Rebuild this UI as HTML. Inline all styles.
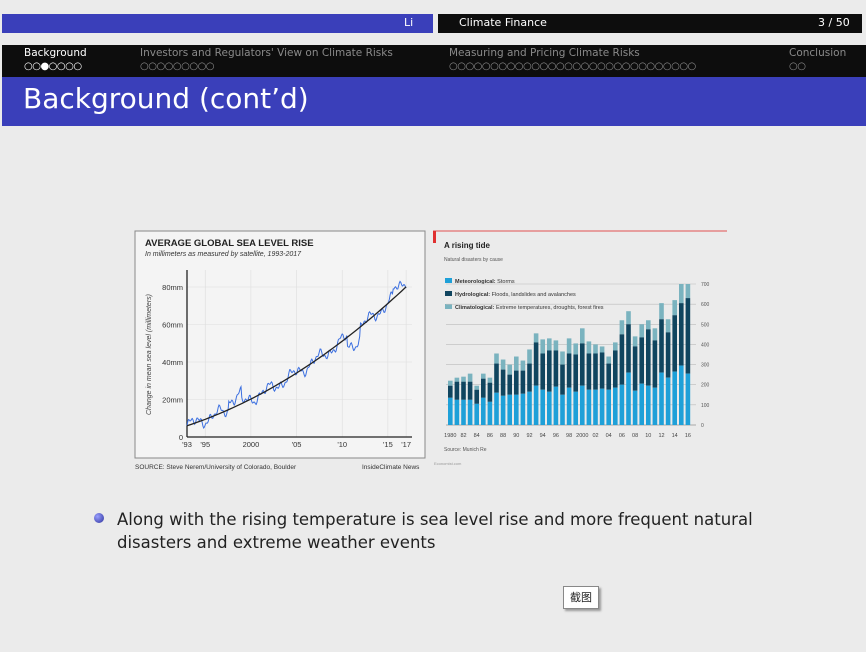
<!DOCTYPE html>
<html><head><meta charset="utf-8"><style>
body{margin:0;width:866px;height:652px;background:#ebebeb;font-family:"DejaVu Sans","Liberation Sans",sans-serif;position:relative;overflow:hidden}
.a{position:absolute}
</style></head><body>
<div class="a" style="left:2px;top:14px;width:431px;height:19px;background:#3a3fba"></div>
<div class="a" style="left:404px;top:16px;color:#fff;font-size:11px">Li</div>
<div class="a" style="left:438px;top:14px;width:424px;height:19px;background:#0d0d0d"></div>
<div class="a" style="left:459px;top:16px;color:#fff;font-size:11px">Climate Finance</div>
<div class="a" style="left:818px;top:16px;color:#fff;font-size:11px">3 / 50</div>
<div class="a" style="left:2px;top:45px;width:864px;height:32px;background:#0d0d0d"></div>
<div class="a" style="left:24px;top:47px;color:#fff;font-size:10.5px">Background</div>
<div class="a" style="left:24px;top:61px;color:#fff;font-size:10px;letter-spacing:-0.5px">○○●○○○○</div>
<div class="a" style="left:140px;top:47px;color:#8a8a8a;font-size:10.5px">Investors and Regulators' View on Climate Risks</div>
<div class="a" style="left:140px;top:61px;color:#8a8a8a;font-size:10px;letter-spacing:-0.5px">○○○○○○○○○</div>
<div class="a" style="left:449px;top:47px;color:#8a8a8a;font-size:10.5px">Measuring and Pricing Climate Risks</div>
<div class="a" style="left:449px;top:61px;color:#8a8a8a;font-size:10px;letter-spacing:-0.5px">○○○○○○○○○○○○○○○○○○○○○○○○○○○○○○</div>
<div class="a" style="left:789px;top:47px;color:#8a8a8a;font-size:10.5px">Conclusion</div>
<div class="a" style="left:789px;top:61px;color:#8a8a8a;font-size:10px;letter-spacing:-0.5px">○○</div>
<div class="a" style="left:2px;top:77px;width:864px;height:49px;background:#3a3fba"></div>
<div class="a" style="left:23px;top:82px;color:#fff;font-size:28px">Background (cont’d)</div>

<svg class="a" style="left:0;top:0" width="866" height="652" id="s">
<rect x="135" y="231" width="290" height="227" fill="#f4f4f4" stroke="#888" stroke-width="1"/>
<text x="145" y="246" font-family="Liberation Sans" font-weight="bold" font-size="9.5" fill="#222">AVERAGE GLOBAL SEA LEVEL RISE</text>
<text x="145" y="256" font-family="Liberation Sans" font-style="italic" font-size="7" fill="#333">In millimeters as measured by satellite, 1993-2017</text>
<text x="135" y="469" font-family="Liberation Sans" font-size="6.5" fill="#333">SOURCE: Steve Nerem/University of Colorado, Boulder</text>
<text x="362" y="469" font-family="Liberation Sans" font-size="6.5" fill="#333">InsideClimate News</text>
<text transform="translate(151,415) rotate(-90)" font-family="Liberation Sans" font-style="italic" font-size="7" fill="#444">Change in mean sea level (millimeters)</text>
<line x1="433" y1="231" x2="727" y2="231" stroke="#e05050" stroke-width="1"/>
<rect x="433" y="231" width="3" height="12" fill="#e03030"/>
<text x="444" y="248" font-family="Liberation Sans" font-weight="bold" font-size="8" fill="#222">A rising tide</text>
<text x="444" y="261" font-family="Liberation Sans" font-size="5" fill="#555">Natural disasters by cause</text>
<rect x="445" y="278" width="7" height="5" fill="#1ea0d8"/><text x="455" y="283" font-family="Liberation Sans" font-size="5.5" fill="#333"><tspan font-weight="bold">Meteorological:</tspan> Storms</text>
<rect x="445" y="291" width="7" height="5" fill="#10455f"/><text x="455" y="296" font-family="Liberation Sans" font-size="5.5" fill="#333"><tspan font-weight="bold">Hydrological:</tspan> Floods, landslides and avalanches</text>
<rect x="445" y="304" width="7" height="5" fill="#7ab3bf"/><text x="455" y="309" font-family="Liberation Sans" font-size="5.5" fill="#333"><tspan font-weight="bold">Climatological:</tspan> Extreme temperatures, droughts, forest fires</text>
<text x="444" y="451" font-family="Liberation Sans" font-size="5" fill="#555">Source: Munich Re</text>
<text x="434" y="465" font-family="Liberation Sans" font-size="4" fill="#999">Economist.com</text>
</svg>

<div class="a" style="left:94px;top:513px;width:10px;height:10px;border-radius:50%;background:radial-gradient(circle at 35% 35%,#9aa0ff,#2a2f9a)"></div>
<div class="a" style="left:117px;top:508px;font-size:16.5px;color:#222;line-height:23px;width:700px">Along with the rising temperature is sea level rise and more frequent natural disasters and extreme weather events</div>
<div class="a" style="left:563px;top:586px;width:34px;height:21px;background:#fff;border:1px solid #888;box-shadow:2px 2px 2px #999;font-family:'Noto Sans CJK SC',sans-serif;font-size:11px;line-height:21px;text-align:center;color:#222">截图</div>

<script>
var s=document.getElementById('s'),h='';
var X0=187,Y0=437,px=1.875,py=9.13;
for(var v=20;v<=80;v+=20){var y=Y0-v*px;h+='<line x1="'+X0+'" y1="'+y+'" x2="412" y2="'+y+'" stroke="#ddd" stroke-width="0.6"/><text x="183" y="'+(y+3)+'" text-anchor="end" font-family="Liberation Sans" font-size="7.5" fill="#333">'+v+'mm</text>';}
h+='<text x="183" y="440" text-anchor="end" font-family="Liberation Sans" font-size="7.5" fill="#333">0</text>';
[[1993,"'93"],[1995,"'95"],[2000,"2000"],[2005,"'05"],[2010,"'10"],[2015,"'15"],[2017,"'17"]].forEach(function(t){var x=X0+(t[0]-1993)*py;h+='<line x1="'+x+'" y1="'+Y0+'" x2="'+x+'" y2="270" stroke="#ddd" stroke-width="0.6"/><text x="'+x+'" y="447" text-anchor="middle" font-family="Liberation Sans" font-size="7.5" fill="#333">'+t[1]+'</text>';});
h+='<line x1="'+X0+'" y1="270" x2="'+X0+'" y2="'+Y0+'" stroke="#222" stroke-width="1.3"/><line x1="'+X0+'" y1="'+Y0+'" x2="412" y2="'+Y0+'" stroke="#222" stroke-width="1.3"/>';
var pts=[],trend=[];
for(var i=0;i<=24*12;i++){var t=i/12;var base=6+1.6*t+0.062*t*t;var n=Math.sin(t*2.3)*2.2+Math.sin(t*5.7)*1.6+Math.sin(t*13)*1.1;if(t>4.5&&t<6)n+=5;if(t>17.5&&t<19)n-=6;if(t>22.5)n+=4;pts.push((X0+t*py).toFixed(1)+','+(Y0-(base+n)*px).toFixed(1));if(i%6==0)trend.push((X0+t*py).toFixed(1)+','+(Y0-base*px).toFixed(1));}
h+='<polyline points="'+pts.join(' ')+'" fill="none" stroke="#3b6fe0" stroke-width="1"/>';
h+='<polyline points="'+trend.join(' ')+'" fill="none" stroke="#222" stroke-width="1.3"/>';
var d=[[135,195,220],[125,215,235],[125,215,240],[125,215,255],[105,175,195],[135,230,255],[115,210,235],[160,305,355],[145,275,325],[150,250,300],[150,270,340],[155,270,320],[165,305,375],[195,410,455],[175,355,425],[165,370,430],[190,370,420],[150,300,365],[185,355,430],[165,350,405],[195,405,480],[175,355,415],[175,355,400],[180,360,390],[175,305,340],[185,370,410],[200,450,520],[260,500,565],[170,390,440],[205,435,500],[195,475,520],[185,420,480],[260,525,605],[235,460,525],[265,545,620],[295,605,700],[255,630,700]];
var B=425,k=141/700,bx=448,pitch=6.6;
for(var v=0;v<=700;v+=100){var y=B-v*k;h+='<line x1="446" y1="'+y+'" x2="696" y2="'+y+'" stroke="'+(v==0?'#666':'#bbb')+'" stroke-width="0.6"/><text x="701" y="'+(y+2)+'" font-family="Liberation Sans" font-size="5" fill="#555">'+v+'</text>';}
d.forEach(function(r,i){var x=bx+i*pitch;h+='<rect x="'+x+'" y="'+(B-r[2]*k)+'" width="4.6" height="'+((r[2]-r[1])*k)+'" fill="#7ab3bf"/><rect x="'+x+'" y="'+(B-r[1]*k)+'" width="4.6" height="'+((r[1]-r[0])*k)+'" fill="#10455f"/><rect x="'+x+'" y="'+(B-r[0]*k)+'" width="4.6" height="'+(r[0]*k)+'" fill="#1ea0d8"/>';
if(i%2==0){var lb=i==0?'1980':(i==20?'2000':String((80+i)%100).padStart(2,'0'));h+='<text x="'+(x+2.3)+'" y="437" text-anchor="middle" font-family="Liberation Sans" font-size="5.5" fill="#444">'+lb+'</text>';}});
s.insertAdjacentHTML('beforeend',h);
</script>
</body></html>
